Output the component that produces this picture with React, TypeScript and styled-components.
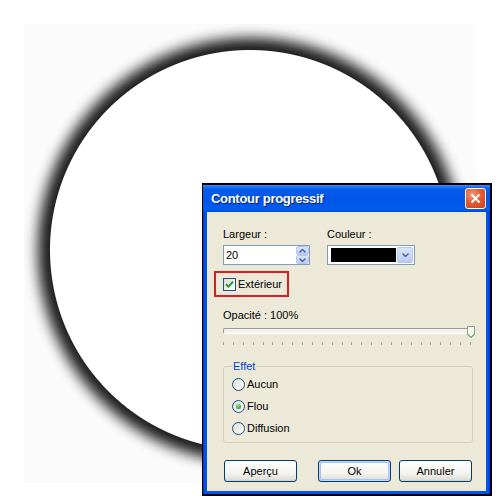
import React from "react";
import styled, { createGlobalStyle } from "styled-components";

const Global = createGlobalStyle`
  html, body { margin: 0; padding: 0; background: #ffffff; }
  body { font-family: "Liberation Sans", Arial, sans-serif; }
`;

const Page = styled.div`
  position: relative;
  width: 500px;
  height: 500px;
  padding: 24px;
  box-sizing: border-box;
  overflow: hidden;
`;

const Canvas = styled.div`
  width: 452px;
  height: 459px;
  background: radial-gradient(
    circle at 226px 226px,
    #ffffff 0,
    #ffffff 199.5px,
    #242424 200.5px,
    #2e2e2e 203px,
    #444444 206px,
    #666666 209px,
    #8c8c8c 212px,
    #b3b3b3 215px,
    #d3d3d3 218px,
    #e9e9e9 221px,
    #f5f5f5 224px,
    #fbfbfb 228px
  );
`;

const Window = styled.div`
  position: absolute;
  left: 202px;
  top: 183px;
  width: 290px;
  height: 313px;
  box-sizing: border-box;
  border-style: solid;
  border-color: #000;
  border-width: 2px 2px 2px 1px;
  display: flex;
  flex-direction: column;
  font-family: "Liberation Sans", Arial, sans-serif;
  font-size: 11px;
  color: #000;
`;

const Frame = styled.div`
  flex: 1;
  display: flex;
  flex-direction: column;
  background: linear-gradient(to right, #0831d9, #0055ea 2px, #0055ea calc(100% - 2px), #0831d9);
`;

const TitleBar = styled.div`
  height: 27px;
  flex: none;
  display: flex;
  align-items: center;
  justify-content: space-between;
  padding: 0 4px 0 8px;
  background: linear-gradient(
    to bottom,
    #3d8ff7 0px,
    #1b6ff2 2px,
    #055cec 5px,
    #0056e8 12px,
    #0057ea 20px,
    #005ff2 24px,
    #0049d8 27px
  );
`;

const Title = styled.span`
  color: #ffffff;
  font-family: "Liberation Sans", Arial, sans-serif;
  font-weight: bold;
  font-size: 13px;
  letter-spacing: -0.3px;
  text-shadow: 1px 1px 0 #0a1f8a;
`;

const CloseButton = styled.div`
  width: 21px;
  height: 21px;
  box-sizing: border-box;
  border: 1px solid #ffffff;
  border-radius: 3px;
  background: radial-gradient(circle at 35% 30%, #f29a7c 0, #e45b33 45%, #c9411b 100%);
  display: flex;
  align-items: center;
  justify-content: center;
`;

const Body = styled.div`
  flex: 1;
  margin: 0 4px 3px 4px;
  background: #ece9d8;
  padding: 16px 0 0 16px;
  display: flex;
  flex-direction: column;
  align-items: flex-start;
`;

const FieldRow = styled.div`
  display: flex;
  gap: 17px;
`;

const Field = styled.div`
  display: flex;
  flex-direction: column;
`;

const Label = styled.span<{ $gap?: number; $top?: number }>`
  display: block;
  font-size: 11px;
  line-height: 13px;
  margin-top: ${(p) => p.$top ?? 0}px;
  margin-bottom: ${(p) => p.$gap ?? 4}px;
`;

const SpinEdit = styled.div`
  width: 87px;
  height: 20px;
  box-sizing: border-box;
  border: 1px solid #7f9db9;
  background: #ffffff;
  display: flex;
  align-items: center;
  padding: 0 0 0 2px;
`;

const SpinText = styled.span`
  flex: 1;
  font-size: 11px;
`;

const SpinColumn = styled.div`
  width: 13px;
  height: 18px;
  display: flex;
  flex-direction: column;
`;

const SpinBtn = styled.div`
  flex: 1;
  border-radius: 2px;
  border: 1px solid #b6c8f1;
  background: linear-gradient(#dbe5fb, #bccdf5);
  display: flex;
  align-items: center;
  justify-content: center;
`;

const Combo = styled.div`
  width: 88px;
  height: 20px;
  box-sizing: border-box;
  border: 1px solid #7f9db9;
  background: #ffffff;
  display: flex;
  padding: 1px;
`;

const Swatch = styled.div`
  flex: 1;
  margin: 1px 1px 1px 2px;
  background: #000000;
`;

const DropBtn = styled.div`
  width: 16px;
  border-radius: 2px;
  border: 1px solid #b6c8f1;
  box-sizing: border-box;
  background: linear-gradient(#dbe5fb, #b9cbf5);
  display: flex;
  align-items: center;
  justify-content: center;
`;

const Highlight = styled.div`
  margin: 6px 0 0 -9px;
  height: 26px;
  box-sizing: border-box;
  border: 2px solid #dc1c20;
  padding: 0 5px 0 7px;
  display: flex;
  align-items: center;
  gap: 2px;
`;

const CheckBox = styled.div`
  width: 13px;
  height: 13px;
  box-sizing: border-box;
  border: 1px solid #1c5180;
  background: linear-gradient(135deg, #dcdcd5, #ffffff);
  display: flex;
  align-items: center;
  justify-content: center;
`;

const Slider = styled.div`
  position: relative;
  width: 250px;
  margin-top: 6px;
`;

const Track = styled.div`
  width: 248px;
  height: 6px;
  box-sizing: border-box;
  border: 1px solid #9d9c92;
  border-bottom-color: #ffffff;
  border-right-color: #e2e0d6;
  border-radius: 2px;
  background: #f3f2ec;
`;

const Thumb = styled.svg`
  position: absolute;
  left: 244px;
  top: -2px;
`;

const Ticks = styled.div`
  margin-top: 8px;
  width: 248px;
  display: flex;
  justify-content: space-between;
`;

const Tick = styled.span`
  width: 1px;
  height: 3px;
  background: #a7a69c;
`;

const Group = styled.fieldset`
  margin: 15px 0 0 0;
  width: 250px;
  box-sizing: border-box;
  border: 1px solid #d0d0bf;
  border-radius: 3px;
  padding: 0 8px 3px 8px;
`;

const Legend = styled.legend`
  padding: 0 1px;
  font-size: 11px;
  line-height: 13px;
  color: #0046d5;
`;

const RadioRow = styled.div`
  height: 22px;
  display: flex;
  align-items: center;
  gap: 2px;
`;

const Radio = styled.div<{ $checked?: boolean }>`
  width: 13px;
  height: 13px;
  box-sizing: border-box;
  border-radius: 50%;
  border: 1px solid #1c5180;
  background: linear-gradient(135deg, #dcdcd5, #ffffff);
  display: flex;
  align-items: center;
  justify-content: center;
  &::after {
    content: "";
    display: ${(p) => (p.$checked ? "block" : "none")};
    width: 5px;
    height: 5px;
    border-radius: 50%;
    background: radial-gradient(circle at 40% 35%, #9ee39e, #21a121 70%);
  }
`;

const ButtonRow = styled.div`
  margin: 17px 0 0 1px;
  display: flex;
`;

const Button = styled.div<{ $default?: boolean; $gap?: number }>`
  width: 73px;
  height: 22px;
  box-sizing: border-box;
  margin-left: ${(p) => p.$gap ?? 0}px;
  border: 1px solid #003c74;
  border-radius: 3px;
  background: linear-gradient(#ffffff, #f4f4f0 60%, #e3e0d6 90%, #d6d0c5);
  box-shadow: ${(p) =>
    p.$default ? "inset 0 0 0 1px #c5d6f7, inset 0 0 0 2px #a9c3f1" : "none"};
  display: flex;
  align-items: center;
  justify-content: center;
  font-size: 11px;
`;

const Chevron = ({ up }: { up?: boolean }) => (
  <svg width="7" height="4" viewBox="0 0 7 4">
    <path
      d={up ? "M0.5 3.5 L3.5 0.5 L6.5 3.5" : "M0.5 0.5 L3.5 3.5 L6.5 0.5"}
      fill="none"
      stroke="#4d6185"
      strokeWidth="1.4"
    />
  </svg>
);

export default function App() {
  const ticks = Array.from({ length: 26 }, (_, i) => i);
  return (
    <>
      <Global />
      <Page>
        <Canvas />
        <Window>
          <Frame>
            <TitleBar>
              <Title>Contour progressif</Title>
              <CloseButton>
                <svg width="11" height="11" viewBox="0 0 11 11">
                  <path d="M1.5 1.5 L9.5 9.5 M9.5 1.5 L1.5 9.5" stroke="#ffffff" strokeWidth="2" />
                </svg>
              </CloseButton>
            </TitleBar>
            <Body>
              <FieldRow>
                <Field>
                  <Label>Largeur :</Label>
                  <SpinEdit>
                    <SpinText>20</SpinText>
                    <SpinColumn>
                      <SpinBtn>
                        <Chevron up />
                      </SpinBtn>
                      <SpinBtn>
                        <Chevron />
                      </SpinBtn>
                    </SpinColumn>
                  </SpinEdit>
                </Field>
                <Field>
                  <Label>Couleur :</Label>
                  <Combo>
                    <Swatch />
                    <DropBtn>
                      <Chevron />
                    </DropBtn>
                  </Combo>
                </Field>
              </FieldRow>
              <Highlight>
                <CheckBox>
                  <svg width="9" height="9" viewBox="0 0 9 9">
                    <path d="M1 4.2 L3.4 6.6 L8 1.8" fill="none" stroke="#21a121" strokeWidth="2" />
                  </svg>
                </CheckBox>
                <span>Extérieur</span>
              </Highlight>
              <Label $gap={0} $top={12}>
                Opacité : 100%
              </Label>
              <Slider>
                <Track />
                <Thumb width="8" height="12" viewBox="0 0 8 12">
                  <path d="M0.5 0.5 H7.5 V8 L4 11.5 L0.5 8 Z" fill="#f7f7f3" stroke="#8aa88a" />
                  <path d="M0.5 8 L4 11.5 L7.5 8" fill="none" stroke="#2fa52f" />
                </Thumb>
                <Ticks>
                  {ticks.map((t) => (
                    <Tick key={t} />
                  ))}
                </Ticks>
              </Slider>
              <Group>
                <Legend>Effet</Legend>
                <RadioRow>
                  <Radio />
                  <span>Aucun</span>
                </RadioRow>
                <RadioRow>
                  <Radio $checked />
                  <span>Flou</span>
                </RadioRow>
                <RadioRow>
                  <Radio />
                  <span>Diffusion</span>
                </RadioRow>
              </Group>
              <ButtonRow>
                <Button>Aperçu</Button>
                <Button $default $gap={21}>
                  Ok
                </Button>
                <Button $gap={8}>Annuler</Button>
              </ButtonRow>
            </Body>
          </Frame>
        </Window>
      </Page>
    </>
  );
}
